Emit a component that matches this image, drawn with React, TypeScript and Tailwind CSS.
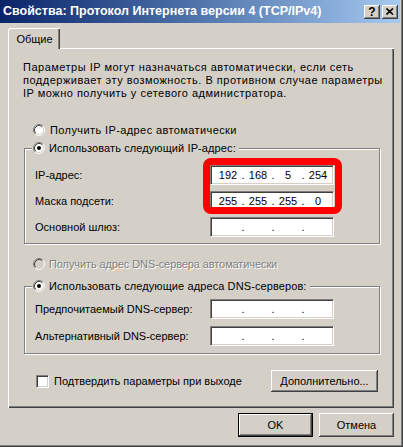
import { Fragment } from 'react'
import type { ReactNode } from 'react'

const sunken =
  'border border-t-[#808080] border-l-[#808080] border-r-white border-b-white bg-white shadow-[inset_1px_1px_#404040,inset_-1px_-1px_#d4d0c8]'
const raised =
  'bg-[#d4d0c8] shadow-[inset_-1px_-1px_#404040,inset_1px_1px_#ffffff,inset_-2px_-2px_#808080,inset_2px_2px_#d4d0c8]'

function Radio({ checked = false, disabled = false }: { checked?: boolean; disabled?: boolean }) {
  return (
    <svg width="12" height="12" viewBox="0 0 12 12" className="shrink-0">
      <circle cx="6" cy="6" r="4.5" fill={disabled ? '#d4d0c8' : '#ffffff'} />
      <path d="M2.11 9.89A5.5 5.5 0 0 1 9.89 2.11" stroke="#808080" fill="none" />
      <path d="M9.89 2.11A5.5 5.5 0 0 1 2.11 9.89" stroke="#ffffff" fill="none" />
      <path d="M2.82 9.18A4.5 4.5 0 0 1 9.18 2.82" stroke="#404040" fill="none" />
      <path d="M9.18 2.82A4.5 4.5 0 0 1 2.82 9.18" stroke="#d4d0c8" fill="none" />
      {checked && <circle cx="6" cy="6" r="2" fill="#000000" />}
    </svg>
  )
}

function IpField({ parts = ['', '', '', ''] }: { parts?: string[] }) {
  return (
    <div className={`flex h-[20px] w-[124px] items-center pl-[3px] ${sunken}`}>
      {parts.map((p, i) => (
        <Fragment key={i}>
          <span className="w-[28px] text-center leading-[13px]">{p}</span>
          {i < 3 && <span className="flex w-[2px] justify-center leading-[13px]">.</span>}
        </Fragment>
      ))}
    </div>
  )
}

function Row({ label, parts }: { label: string; parts?: string[] }) {
  return (
    <div className="flex items-center">
      <span className="w-[175px]">{label}</span>
      <IpField parts={parts} />
    </div>
  )
}

function GroupBox({ legend, className, children }: { legend: string; className: string; children: ReactNode }) {
  return (
    <div
      className={`relative ml-[15px] w-[356px] border border-[#808080] pl-[10px] shadow-[inset_1px_1px_#ffffff,1px_1px_#ffffff] ${className}`}
    >
      <div className="absolute left-[7px] top-[-8px] flex h-[14px] items-center gap-[4px] bg-[#d4d0c8] pl-[1px] pr-[3px]">
        <Radio checked />
        <span className="tracking-[0.1px]">{legend}</span>
      </div>
      {children}
    </div>
  )
}

function Button({ children, w, isDefault = false }: { children: ReactNode; w: string; isDefault?: boolean }) {
  return (
    <div className={`${w} ${isDefault ? 'border border-black' : ''}`}>
      <div className={`flex h-full w-full items-center justify-center ${raised}`}>{children}</div>
    </div>
  )
}

export default function App() {
  return (
    <div className="relative flex h-[447px] w-[403px] flex-col bg-[#d4d0c8] font-['Liberation_Sans',Arial,sans-serif] text-[11px] text-black shadow-[inset_-1px_-1px_#404040,inset_-2px_-2px_#808080]">
      {/* title bar */}
      <div className="flex h-[23px] w-[400px] items-center bg-gradient-to-r from-[#0a246a] to-[#a6caf0] pl-[3px] pr-[2px]">
        <span className="text-[12.5px] font-bold text-white">Свойства: Протокол Интернета версии 4 (TCP/IPv4)</span>
        <div className={`ml-auto flex h-[14px] w-[16px] items-center justify-center pt-[1px] text-[12px] font-bold leading-none ${raised}`}>
          ?
        </div>
        <div className={`ml-[2px] flex h-[14px] w-[16px] items-center justify-center ${raised}`}>
          <svg width="8" height="7" viewBox="0 0 8 7">
            <path d="M0.5 0.5L7 6.5M7 0.5L0.5 6.5" stroke="#000" strokeWidth="1.6" />
          </svg>
        </div>
      </div>

      {/* tab */}
      <div className="relative z-10 -mb-[1px] ml-[8px] mt-[5px] flex h-[21px] w-[52px] items-center justify-center rounded-tl-[3px] border-l border-t border-white bg-[#d4d0c8] shadow-[inset_-1px_0_#404040,inset_-2px_0_#808080]">
        Общие
      </div>

      {/* panel */}
      <div className="ml-[8px] flex h-[360px] w-[386px] flex-col border-l border-t border-white shadow-[inset_-1px_-1px_#404040,inset_-2px_-2px_#808080]">
        <p className="mt-[12px] pl-[14px] leading-[13px] tracking-[0.5px]">
          Параметры IP могут назначаться автоматически, если сеть
          <br />
          поддерживает эту возможность. В противном случае параметры
          <br />
          IP можно получить у сетевого администратора.
        </p>

        <div className="ml-[24px] mt-[22px] flex h-[16px] items-center gap-[5px]">
          <Radio />
          <span className="tracking-[0.4px]">Получить IP-адрес автоматически</span>
        </div>

        <GroupBox legend="Использовать следующий IP-адрес:" className="mt-[10px] flex h-[96px] flex-col gap-[6px] pt-[16px]">
          <Row label="IP-адрес:" parts={['192', '168', '5', '254']} />
          <Row label="Маска подсети:" parts={['255', '255', '255', '0']} />
          <Row label="Основной шлюз:" />
        </GroupBox>

        <div className="ml-[24px] mt-[12px] flex h-[16px] items-center gap-[4px]">
          <Radio disabled />
          <span className="tracking-[-0.1px] text-[#808080] [text-shadow:1px_1px_0_#ffffff]">
            Получить адрес DNS-сервера автоматически
          </span>
        </div>

        <GroupBox legend="Использовать следующие адреса DNS-серверов:" className="mt-[14px] flex h-[68px] flex-col gap-[7px] pt-[12px]">
          <Row label="Предпочитаемый DNS-сервер:" />
          <Row label="Альтернативный DNS-сервер:" />
        </GroupBox>

        <div className="mt-[16px] flex h-[22px] items-center">
          <div className={`ml-[27px] h-[13px] w-[13px] ${sunken}`} />
          <span className="ml-[5px]">Подтвердить параметры при выходе</span>
          <div className="ml-auto mr-[16px] h-[22px]">
            <Button w="w-[107px] h-[22px]">Дополнительно...</Button>
          </div>
        </div>
      </div>

      {/* dialog buttons */}
      <div className="mt-[5px] flex justify-end gap-[6px] pr-[9px]">
        <Button w="w-[75px] h-[24px]" isDefault>
          OK
        </Button>
        <Button w="w-[75px] h-[24px]">Отмена</Button>
      </div>

      {/* red highlight */}
      <div className="absolute left-[203px] top-[158px] h-[56px] w-[139px] rounded-[8px] border-[7px] border-[#ff0000]" />
    </div>
  )
}
